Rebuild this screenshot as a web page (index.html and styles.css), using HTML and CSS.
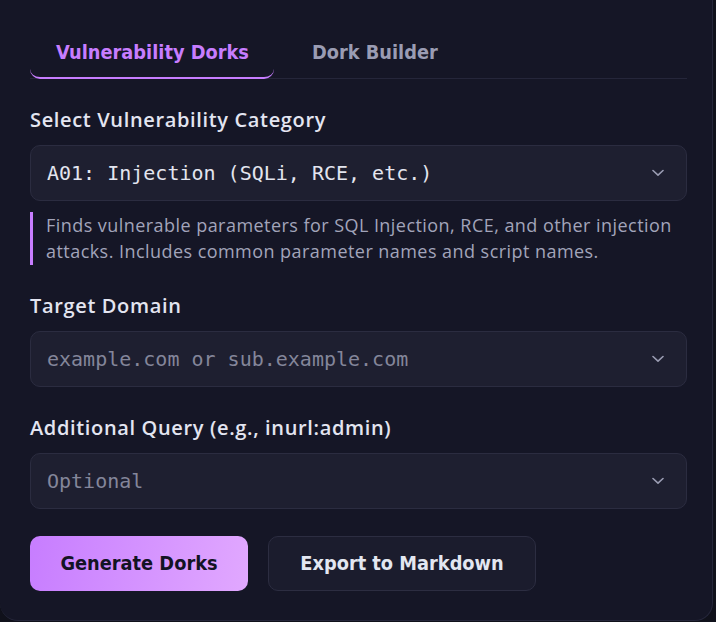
FILE: index.html
```html
<!DOCTYPE html>
<html lang="en">
<head>
<meta charset="utf-8">
<title>Dork Generator</title>
<link rel="stylesheet" href="styles.css">
</head>
<body>
<main class="card">
  <nav class="tabs">
    <button class="tab tab-active">Vulnerability Dorks</button>
    <button class="tab">Dork Builder</button>
  </nav>

  <section class="field">
    <label class="label">Select Vulnerability Category</label>
    <div class="select">
      <span class="select-value">A01: Injection (SQLi, RCE, etc.)</span>
      <svg class="chev" width="12" height="8" viewBox="0 0 12 8"><path d="M1 1.5 L6 6.2 L11 1.5" fill="none" stroke="#9a9cb2" stroke-width="1.6" stroke-linecap="round" stroke-linejoin="round"/></svg>
    </div>
    <p class="desc">Finds vulnerable parameters for SQL Injection, RCE, and other injection attacks. Includes common parameter names and script names.</p>
  </section>

  <section class="field">
    <label class="label">Target Domain</label>
    <div class="select">
      <span class="select-value placeholder">example.com or sub.example.com</span>
      <svg class="chev" width="12" height="8" viewBox="0 0 12 8"><path d="M1 1.5 L6 6.2 L11 1.5" fill="none" stroke="#9a9cb2" stroke-width="1.6" stroke-linecap="round" stroke-linejoin="round"/></svg>
    </div>
  </section>

  <section class="field">
    <label class="label">Additional Query (e.g., inurl:admin)</label>
    <div class="select">
      <span class="select-value placeholder">Optional</span>
      <svg class="chev" width="12" height="8" viewBox="0 0 12 8"><path d="M1 1.5 L6 6.2 L11 1.5" fill="none" stroke="#9a9cb2" stroke-width="1.6" stroke-linecap="round" stroke-linejoin="round"/></svg>
    </div>
  </section>

  <div class="actions">
    <button class="btn btn-primary">Generate Dorks</button>
    <button class="btn btn-secondary">Export to Markdown</button>
  </div>
</main>
</body>
</html>
```

FILE: styles.css
```css
* { box-sizing: border-box; }

html, body {
  margin: 0;
  padding: 0;
  background: #10111b;
  height: 100%;
}

body {
  font-family: "Open Sans", "Noto Sans", sans-serif;
}

.card {
  width: 713px;
  height: 621px;
  background: #151626;
  border: 1px solid #25263a;
  border-top: none;
  border-left: none;
  border-radius: 0 0 18px 18px;
  padding: 29px 25px 0 30px;
  display: flex;
  flex-direction: column;
  gap: 27px;
}

.tabs {
  display: flex;
  gap: 12px;
  border-bottom: 1px solid #25263a;
}

.tab {
  font-family: "DejaVu Sans Condensed", "DejaVu Sans", sans-serif;
  font-stretch: condensed;
  font-weight: bold;
  font-size: 19.8px;
  color: #9a9cb3;
  background: none;
  border: none;
  padding: 12px 25px 12px 26px;
  margin-bottom: -1px;
  border-bottom: 2px solid transparent;
  border-radius: 0 0 10px 10px;
  cursor: pointer;
  line-height: 24px;
}

.tab-active {
  color: #c77dff;
  border-bottom-color: #c77dff;
}

.field {
  display: flex;
  flex-direction: column;
}

.label {
  font-size: 20px;
  font-weight: 600;
  color: #e3e5f1;
  line-height: 28px;
  margin-bottom: 11px;
  letter-spacing: 0.65px;
}

.select {
  height: 56px;
  background: #1e1f30;
  border: 1px solid #2b2c40;
  border-radius: 10px;
  display: flex;
  align-items: center;
  justify-content: space-between;
  padding: 0 22px 0 16px;
}

.select-value {
  font-family: "DejaVu Sans Mono", monospace;
  font-size: 20px;
  color: #e3e5ef;
}

.select-value.placeholder {
  color: #84869a;
}

.chev { display: block; }

.desc {
  margin: 11px 0 0 0;
  border-left: 3px solid #c77dff;
  padding: 0 0 1px 13px;
  font-size: 18px;
  line-height: 26px;
  color: #a2a4ba;
  letter-spacing: 0.45px;
}

.actions {
  display: flex;
  gap: 20px;
}

.btn {
  height: 55px;
  border-radius: 10px;
  font-family: "DejaVu Sans Condensed", "DejaVu Sans", sans-serif;
  font-stretch: condensed;
  font-weight: bold;
  font-size: 19.8px;
  padding: 0;
  white-space: nowrap;
  cursor: pointer;
}

.btn-primary {
  width: 218px;
  background: linear-gradient(100deg, #c77dff 0%, #e1a8ff 100%);
  color: #131324;
  border: none;
}

.btn-secondary {
  width: 268px;
  background: #1b1c2d;
  border: 1px solid #2c2d41;
  color: #e3e7f1;
}
```
